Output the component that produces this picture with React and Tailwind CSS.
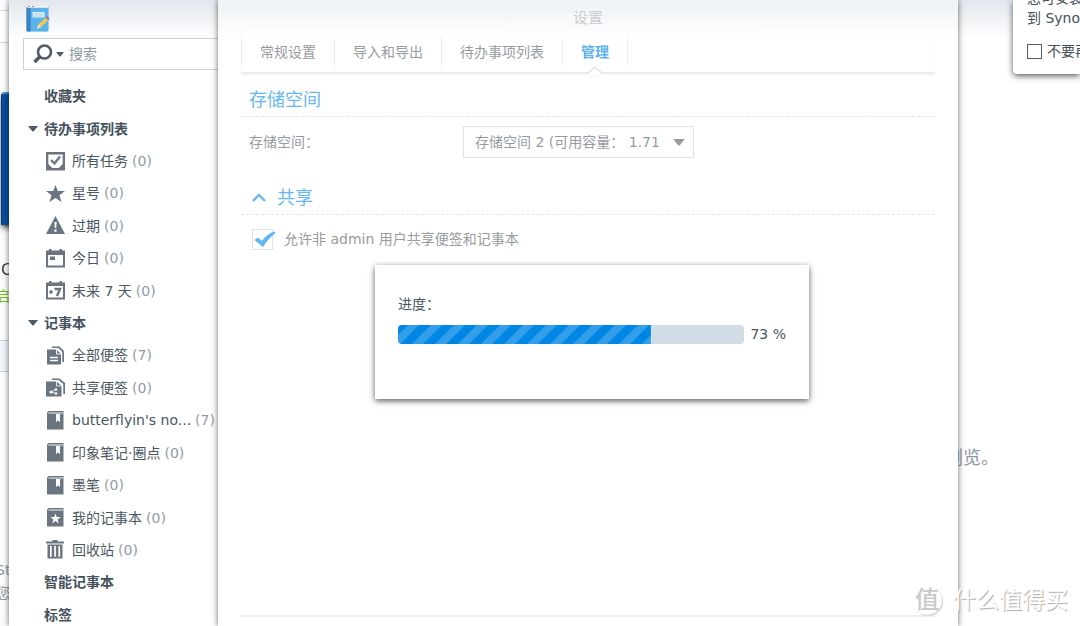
import { useState } from 'react';
import clsx from 'clsx';

const notes = [
    { label: '收藏夹', heading: true },
    { label: '待办事项列表', heading: true, open: true },
    { label: '所有任务', count: 0, icon: 'task' },
    { label: '星号', count: 0, icon: 'star' },
    { label: '过期', count: 0, icon: 'warning' },
    { label: '今日', count: 0, icon: 'today' },
    { label: '未来 7 天', count: 0, icon: 'week' },
    { label: '记事本', heading: true, open: true },
    { label: '全部便签', count: 7, icon: 'notes' },
    { label: '共享便签', count: 0, icon: 'shared' },
    { label: "butterflyin's no...", count: 7, icon: 'book' },
    { label: '印象笔记·圈点', count: 0, icon: 'book' },
    { label: '墨笔', count: 0, icon: 'book' },
    { label: '我的记事本', count: 0, icon: 'mybook' },
    { label: '回收站', count: 0, icon: 'trash' },
    { label: '智能记事本', heading: true },
    { label: '标签', heading: true },
];

const tabs = ['常规设置', '导入和导出', '待办事项列表', '管理'];

const icons = {
    task: (
        <>
            <path fillRule="evenodd" d="M0 0h19v18.500H0zM2.300 2.500v9.500l4 4h6.400l4-4V2.500z" />
            <path d="M5 8l3.500 3.500L14 4.500" fill="none" stroke="currentColor" strokeWidth="2.400" />
        </>
    ),
    star: <path d="M9.500 1l2.300 6.100H19l-5.500 4.200 2 6.700-6-4-6 4 2-6.700L0 7.100h7.200z" />,
    warning: (
        <>
            <path d="M9.500 0L19 18H0z" />
            <path d="M8.300 6h2.400l-.5 6H8.800zM8.400 13.500h2.200v2.200H8.400z" fill="#fff" />
        </>
    ),
    today: (
        <>
            <path fillRule="evenodd" d="M0 1.500h3V0h2.500v1.500h8V0H16v1.500h3V18.500H0zM2 6v10.500h15V6z" />
            <path d="M4 7.500h5v3.500H4z" />
        </>
    ),
    week: (
        <>
            <path fillRule="evenodd" d="M0 1.500h3V0h2.500v1.500h8V0H16v1.500h3V18.500H0zM2 5v11.500h15V5z" />
            <path d="M5 9v4M3 11h4" fill="none" stroke="currentColor" strokeWidth="1.500" />
            <path d="M8.500 8h5.500l-3 7" fill="none" stroke="currentColor" strokeWidth="2.400" />
        </>
    ),
    notes: (
        <>
            <path d="M6 .5h7.500L18 5v11h-1.700V6L12.500 2H6z" />
            <path d="M1 3.500h9.500L15 8v10.500H1z" />
            <path d="M10.500 3.500V8H15" fill="none" stroke="#fff" />
            <path d="M4 11.500h8M4 14.500h8" fill="none" stroke="#fff" strokeWidth="1.300" />
        </>
    ),
    shared: (
        <>
            <path d="M6 .5h7.500L19 5v11h-1.700V6L12.500 2H6z" />
            <path d="M0 3.500h10.500L15.500 8v10.500H0z" />
            <path d="M10.500 3.500V8h5M10 11.500L5 14l5 1.500" fill="none" stroke="#fff" strokeWidth="0.800" />
            <circle cx="5" cy="14" r="1.600" fill="#fff" />
            <circle cx="10" cy="11.500" r="1.300" fill="#fff" />
            <circle cx="10" cy="15.500" r="1.300" fill="#fff" />
        </>
    ),
    book: (
        <>
            <path d="M2.500 0H17.500v18.500H1V1.500z" />
            <path d="M2.500 2H17" stroke="#fff" strokeWidth="0.900" />
            <path d="M10 3h4v8l-2-1.500-2 1.500z" fill="#fff" />
        </>
    ),
    mybook: (
        <>
            <path d="M2.500 0H17.500v18.500H1V1.500z" />
            <path d="M2.500 2H17" stroke="#fff" strokeWidth="0.900" />
            <path d="M9.500 5.500l1.300 3.600h3.900l-3.100 2.300 1.200 3.800-3.300-2.300-3.300 2.300 1.200-3.800-3.100-2.300h3.900z" fill="#fff" />
        </>
    ),
    trash: (
        <>
            <path d="M6.500 0h5v1.500H18V3.500H0v-2h6.500z" />
            <path fillRule="evenodd" d="M1.500 4.500h15v14h-15zM4 6v10.800h1.700V6zM8.200 6v10.800h1.700V6zM12.400 6v10.800h1.700V6z" />
        </>
    ),
};

function Caret({ className }) {
    return (
        <svg viewBox="0 0 10 6" fill="currentColor" className={className} aria-hidden="true">
            <path d="M0 0h10L5.500 5.500h-1z" />
        </svg>
    );
}

function NotebookLogo() {
    return (
        <svg viewBox="0 0 24 27" className="ml-[3px] h-[27px] w-6" aria-hidden="true">
            <rect x="0.500" y="1" width="22" height="25.500" rx="1.500" fill="#4aa3e0" />
            <path d="M.5 2h4v24.500h-3a1 1 0 01-1-1z" fill="#3a83bf" />
            <path d="M1 1h21v1.800H1z" fill="#f4f4f4" />
            <path d="M2 1.500h2M6 1.500h2" stroke="#e8784a" />
            <path d="M5 3h17v23H5z" fill="#5ab4ec" />
            <rect x="6.500" y="7" width="12" height="5.500" fill="#d9ecf8" />
            <path d="M8 9h9M8 11h9" stroke="#a9c9de" strokeWidth="0.700" />
            <path d="M11 24l1.500-4.500 8-7.500 2.500 2.500-8 7.500z" fill="#f8c84a" />
            <path d="M11 24l1.500-4.500 2.500 2.500z" fill="#f5e2c0" />
            <path d="M19.700 12.700l1.500-1.400 2.500 2.500-1.500 1.400z" fill="#8a7788" />
        </svg>
    );
}

function NavItem({ item }) {
    if (item.heading) {
        return (
            <li className="flex items-center">
                <span className="w-[21px] pl-[5px] text-[#4c5966]">
                    {item.open && <Caret className="h-[6px] w-[10px]" />}
                </span>
                <span className="font-bold text-[#46525e]">{item.label}</span>
            </li>
        );
    }
    return (
        <li className="flex items-center pl-[23px] whitespace-nowrap text-[#4b5661]">
            <svg viewBox="0 0 19 19" fill="currentColor" className="mr-[7px] h-[19px] w-[19px] shrink-0 text-[#6a7581]" aria-hidden="true">
                {icons[item.icon]}
            </svg>
            <a href="#" className="pr-1">{item.label}</a>
            <span className="text-[#8f9ba8]">({item.count})</span>
        </li>
    );
}

// Parts of the desktop that show left of the window
function Desktop() {
    return (
        <div className="absolute inset-y-0 left-0 w-[9px] overflow-hidden bg-[#fdfdfd] whitespace-nowrap">
            <div className="absolute top-[10px] h-[33px] w-full border-y border-[#d3dce6] bg-white" />
            <div className="absolute top-[92px] left-px h-[133px] w-4 rounded-tl border-t-2 border-l border-t-[#3f8fd0] border-l-[#063a80] bg-[#074f9c] shadow-md shadow-black/60" />
            <span className="absolute top-[258px] left-px text-base text-[#333f4b]">C</span>
            <span className="absolute top-[286px] -left-1 text-[#76c21b]">启</span>
            <div className="absolute top-[340px] h-8 w-full border-y border-[#c3d2e2] bg-[#eff5fb]" />
            <span className="absolute top-[560px] -left-1 text-[#929ba5]">St</span>
            <span className="absolute top-[583px] -left-1 text-[#929ba5]">您</span>
        </div>
    );
}

function Sidebar() {
    return (
        <aside className="w-[230px] pl-[14px] pt-[5px]">
            <NotebookLogo />
            <label className="mt-[6px] flex h-8 items-center border border-[#c6d2de] bg-white pl-[9px] text-[#4f5b67]">
                <svg viewBox="0 0 20 20" className="h-5 w-5" fill="none" stroke="currentColor" aria-hidden="true">
                    <circle cx="11.500" cy="8" r="6.500" strokeWidth="2.600" />
                    <path d="M7 12.500l-5.500 5.500" strokeWidth="3.600" />
                </svg>
                <Caret className="ml-[3px] h-[5px] w-2" />
                <input type="text" placeholder="搜索" aria-label="搜索" className="ml-[5px] w-28 outline-none placeholder:text-[#8b97a3]" />
            </label>
            <ul className="mt-[10px] grid h-[551px] auto-rows-fr">
                {notes.map((item, i) => (
                    <NavItem key={i} item={item} />
                ))}
            </ul>
        </aside>
    );
}

function SettingsDialog() {
    const [active, setActive] = useState('管理');
    const [share, setShare] = useState(true);

    return (
        <section className="absolute inset-y-0 right-[122px] left-[218px] flex flex-col bg-white bg-linear-to-b from-[#eef1f5] to-white to-[38px] px-[23px] text-[#979b9f] shadow-[0_0_6px_rgba(0,0,0,0.6)]">
            <h1 className="h-[38px] text-center text-[15px] leading-9 text-[#cbced1]">设置</h1>
            <div className="flex h-9 items-start border-b-2 border-[#ebecee] shadow-[0_2px_2px_rgba(0,0,0,0.03)]">
                {tabs.map((tab) => (
                    <button
                        key={tab}
                        type="button"
                        onClick={() => setActive(tab)}
                        className={clsx(
                            'relative h-7 border-r border-[#e6edf4] px-[18px] first:border-l',
                            tab === active && 'font-bold text-[#5db2f2]'
                        )}
                    >
                        {tab}
                        {tab === active && (
                            <svg viewBox="0 0 18 9" className="absolute top-7 left-1/2 h-[9px] w-[18px] -translate-x-1/2" aria-hidden="true">
                                <path d="M0 9L2 7l7-6 7 6 2 2z" fill="#fff" />
                                <path d="M0 7h2l7-6 7 6h2" fill="none" stroke="#e3e4e6" strokeWidth="1.500" />
                            </svg>
                        )}
                    </button>
                ))}
            </div>

            <h2 className="mt-2 h-[35px] border-b border-dashed border-[#dfe8f1] pl-2 text-lg leading-9 text-[#67b7f1]">存储空间</h2>
            <div className="mt-[9px] flex h-8 items-center pl-2">
                <label htmlFor="volume" className="w-[214px]">存储空间：</label>
                <div className="relative">
                    <select id="volume" className="h-8 w-[231px] appearance-none border border-[#dce2ea] bg-white px-[11px] outline-none">
                        <option>存储空间 2 (可用容量： 1.71</option>
                    </select>
                    <Caret className="pointer-events-none absolute top-[13px] right-[9px] h-[7px] w-3" />
                </div>
            </div>

            <h2 className="mt-[22px] flex h-[35px] items-center border-b border-dashed border-[#dfe8f1] pl-[11px] text-lg leading-9 text-[#67b7f1]">
                <svg viewBox="0 0 14 9" className="mr-[11px] h-[9px] w-[14px]" fill="none" stroke="currentColor" strokeWidth="2.400" aria-hidden="true">
                    <path d="M1 8l6-6 6 6" />
                </svg>
                <span className="pt-[2px]">共享</span>
            </h2>
            <label className="mt-3 flex h-6 items-center pl-[11px]">
                <span className="relative mr-[11px] h-[21px] w-[21px]">
                    <input
                        type="checkbox"
                        checked={share}
                        onChange={(e) => setShare(e.target.checked)}
                        className="block h-[21px] w-[21px] appearance-none border border-[#dce3eb] bg-white"
                    />
                    {share && (
                        <svg viewBox="0 0 24 21" className="pointer-events-none absolute top-0 left-0 h-[21px] w-6" aria-hidden="true">
                            <path d="M2.500 11l3.500-2.500 4 3.500C13 7.500 17 4 22.500 2.500l1 1.500C18 8 14 13 11 18z" fill="#5fb5f5" />
                        </svg>
                    )}
                </span>
                允许非 admin 用户共享便签和记事本
            </label>
            <div className="mt-auto mb-[9px] border-t-2 border-[#eeeeef]" />
        </section>
    );
}

function ProgressBox({ value }) {
    return (
        <div role="dialog" aria-label="进度" className="absolute top-[265px] right-[271px] left-[375px] h-[134px] bg-white px-[23px] pt-[29px] text-[#4a545e] shadow-[0_2px_6px_rgba(0,0,0,0.65)]">
            <p className="leading-5">进度：</p>
            <div className="mt-[10px] flex items-center gap-[6px] whitespace-nowrap">
                <div className="h-[19px] flex-1 overflow-hidden rounded bg-[#d2dce6]" role="progressbar" aria-valuenow={value}>
                    <svg className="block h-full" style={{ width: `${value}%` }} aria-hidden="true">
                        <defs>
                            <pattern id="stripes" width="23" height="19" patternUnits="userSpaceOnUse">
                                <rect width="23" height="19" fill="#0086e5" />
                                <path d="M-9 19L10 0h11L2 19zM14 19L33 0h11L25 19z" fill="#339eea" />
                            </pattern>
                        </defs>
                        <rect width="100%" height="100%" fill="url(#stripes)" />
                    </svg>
                </div>
                <span>{value} %</span>
            </div>
        </div>
    );
}

function Notification() {
    return (
        <div className="absolute top-0 right-0 h-[74px] w-[67px] rounded-bl bg-white shadow-[0_2px_6px_rgba(0,0,0,0.65)]">
            <div className="h-full overflow-hidden pl-[14px] whitespace-nowrap text-[#46505a]">
                <p className="-mt-3 leading-5">您可安装<br />到 Synology</p>
                <label className="mt-[13px] flex items-center gap-[5px]">
                    <input type="checkbox" className="h-[15px] w-[15px] shrink-0 appearance-none border border-[#525c66] bg-white" />
                    不要再显示
                </label>
            </div>
        </div>
    );
}

function Watermark() {
    return (
        <div className="absolute right-3 bottom-[10px] flex items-center gap-[11px] text-white [text-shadow:1px_1px_1px_#aaa]">
            <span className="flex h-[30px] w-[30px] items-center justify-center rounded-full text-2xl font-medium text-[#c9c9c9] shadow-[1px_1px_1px_#ccc] [text-shadow:none]">值</span>
            <span className="text-[23px] leading-8">什么值得买</span>
        </div>
    );
}

export default function App() {
    return (
        <div className="relative h-screen overflow-hidden bg-white font-['DejaVu_Sans','Noto_Sans_CJK_SC',sans-serif] text-sm">
            <Desktop />
            <main className="relative ml-[9px] h-full bg-white bg-linear-to-b from-[#e3e7ed] to-white to-[38px] shadow-[0_0_6px_rgba(0,0,0,0.6)]">
                <Sidebar />
                <p className="absolute top-[444px] right-[81px] text-lg text-[#8e98a4]">浏览。</p>
            </main>
            <SettingsDialog />
            <ProgressBox value={73} />
            <Notification />
            <Watermark />
        </div>
    );
}
